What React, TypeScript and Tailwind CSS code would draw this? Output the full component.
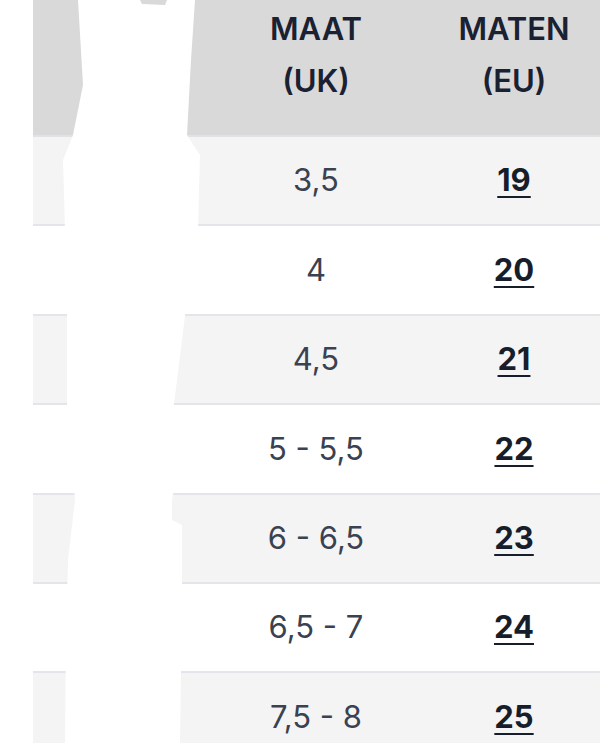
import React from "react"

const rows = [
    { uk: "3,5", eu: "19" },
    { uk: "4", eu: "20" },
    { uk: "4,5", eu: "21" },
    { uk: "5 - 5,5", eu: "22" },
    { uk: "6 - 6,5", eu: "23" },
    { uk: "6,5 - 7", eu: "24" },
    { uk: "7,5 - 8", eu: "25" },
]

const App = () => {
    return (
        <div className="relative w-[600px] h-[743px] overflow-hidden bg-white font-['Inter',sans-serif]">
            <div className="ml-[33px] w-[600px]">
                <div className="flex h-[137px] bg-[#d9d9d9] border-b-2 border-[#e1e2e8] text-[#1a2132] font-semibold text-[31px] leading-[52px] pt-[3px]">
                    <div className="w-[184px]" />
                    <div className="w-[198px] text-center">
                        MAAT
                        <br />
                        (UK)
                    </div>
                    <div className="w-[198px] text-center">
                        MATEN
                        <br />
                        (EU)
                    </div>
                </div>
                {rows.map((row, i) => (
                    <div
                        key={row.eu}
                        className={`flex items-center h-[89.4px] border-b-2 border-[#e4e5ea] ${
                            i % 2 === 0 ? "bg-[#f4f4f4]" : "bg-white"
                        }`}
                    >
                        <div className="w-[184px]" />
                        <div className="w-[198px] text-center text-[31px] text-[#3a4150]">
                            {row.uk}
                        </div>
                        <div className="w-[198px] text-center text-[31px] font-bold text-[#161d2b] underline decoration-2 underline-offset-[5px]">
                            {row.eu}
                        </div>
                    </div>
                ))}
            </div>
            <svg
                className="absolute left-0 top-0"
                width="600"
                height="743"
                viewBox="0 0 600 743"
            >
                <path
                    d="M78,0 L140,0 L142,4 L165,5 L167,0 L195,0 L191,60 L187,135 L200,155 L198,230 L187,300 L174,404 L178,470 L172,500 L172,520 L182,525 L182,600 L180,743 L65,743 L66,640 L68,560 L75,500 L67,404 L67,313 L65,230 L63,160 L73,135 L83,85 Z"
                    fill="#ffffff"
                />
            </svg>
        </div>
    )
}

export default App
